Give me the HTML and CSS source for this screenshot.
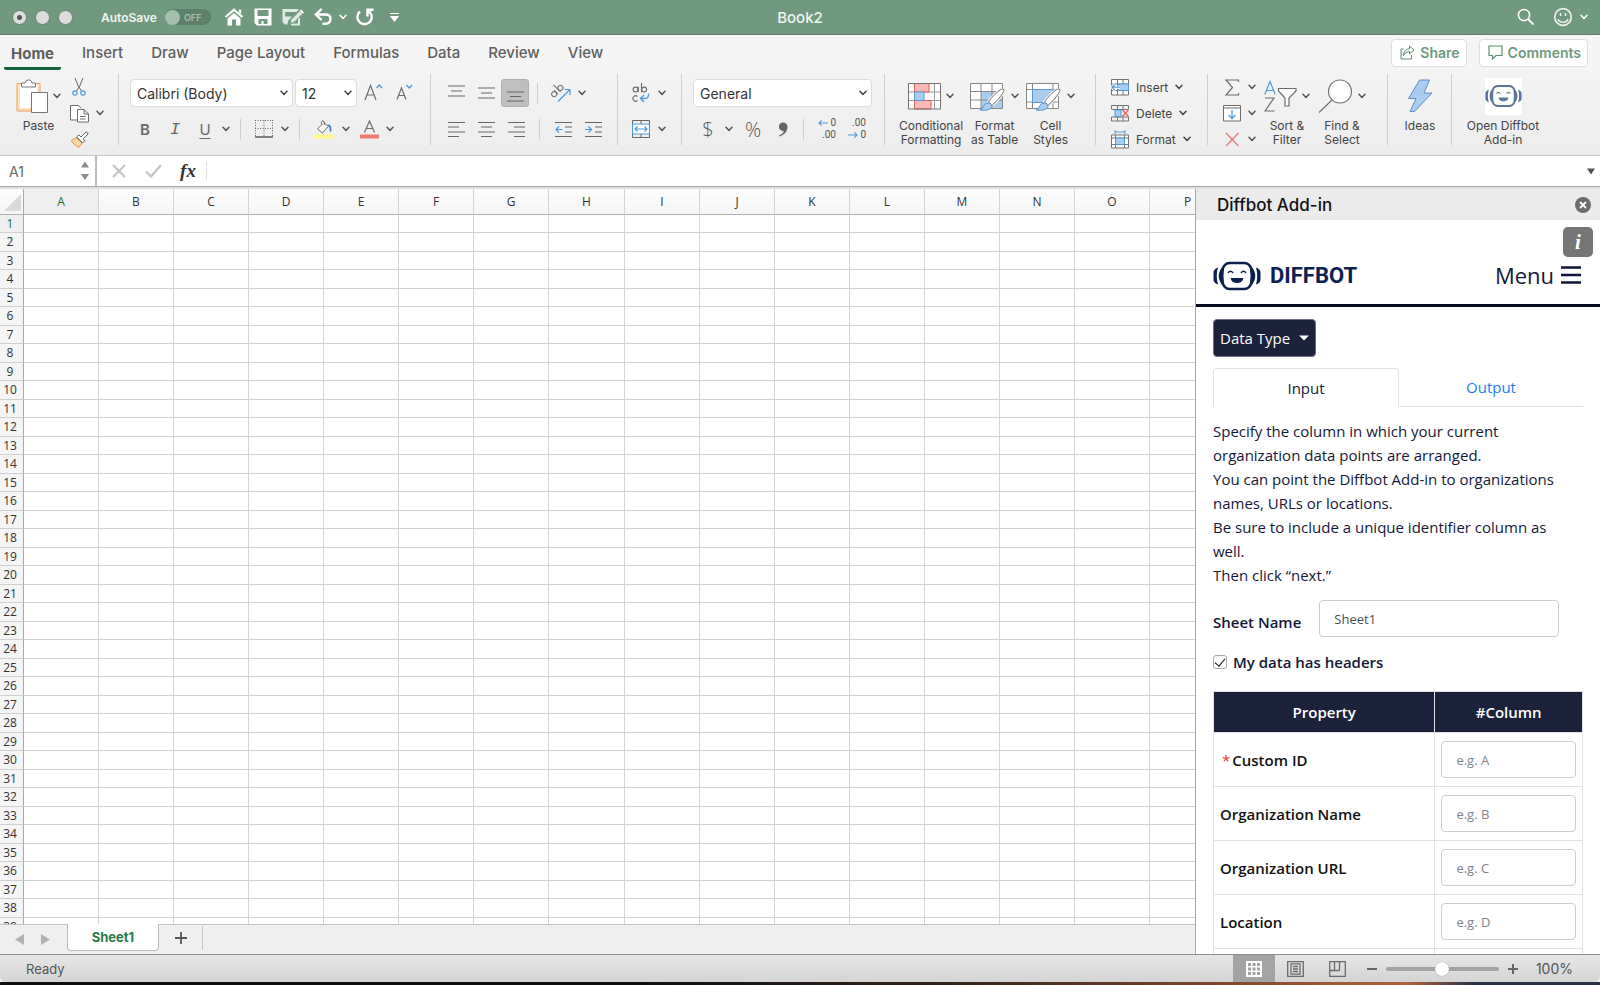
FILE: index.html
```html
<!DOCTYPE html>
<html lang="en">
<head>
<meta charset="utf-8">
<title>Book2</title>
<link rel="stylesheet" href="styles.css">
</head>
<body>
<svg class="sprite" aria-hidden="true">
  <symbol id="chev" viewBox="0 0 8 6"><path d="M1 1.2 4 4.500 7 1.2" fill="none" stroke="currentColor" stroke-width="1.500" stroke-linecap="round" stroke-linejoin="round"/></symbol>
  <symbol id="bot" viewBox="0 0 48 30">
    <path d="M5 6.500Q1 8 .5 11V19Q1 22 5 23.500Q2.500 15 5 6.500ZM43 6.500Q47 8 47.500 11V19Q47 22 43 23.500Q45.500 15 43 6.500Z" fill="currentColor"/>
    <path d="M10 5Q1.500 15 10 25ZM38 5Q46.500 15 38 25Z" fill="currentColor"/>
    <path d="M17 2H31Q36 2 38 7Q39.500 15 38 23Q36 28 31 28H17Q12 28 10 23Q8.500 15 10 7Q12 2 17 2Z" fill="none" stroke="currentColor" stroke-width="2.400"/>
    <path d="M15 12Q17.500 8.500 20 12M28 12Q30.500 8.500 33 12" fill="none" stroke="currentColor" stroke-width="1.400"/>
    <path d="M17.500 17H30.500Q29.500 22 24 22T17.500 17Z" fill="currentColor"/>
  </symbol>
  <symbol id="brush" viewBox="0 0 26 24">
    <path d="M23.500 .8C19 2.500 12 10 9.500 14L13 17.500C17 14 24 6 25 2.500Q25 .5 23.500 .8Z" fill="#fff" stroke="#f1f1f1" stroke-width="3"/>
    <path d="M23.500 .8C19 2.500 12 10 9.500 14L13 17.500C17 14 24 6 25 2.500Q25 .5 23.500 .8Z" fill="#fff" stroke="#737373"/>
    <path d="M9 15Q13 15 13 18.500Q11 23.500 1 22Q4 21 4.500 18Q6 15 9 15Z" fill="#a9cdf0" stroke="#5c98d0"/>
  </symbol>
</svg>

<header class="titlebar">
  <div class="title-left">
    <div class="lights"><i class="light dot"></i><i class="light"></i><i class="light"></i></div>
    <label class="autosave">AutoSave <button class="toggle" type="button" aria-label="AutoSave"><span class="knob"></span>OFF</button></label>
    <div class="quick">
      <button type="button" aria-label="Home"><svg width="20" height="18" viewBox="0 0 20 18"><path d="M1.500 9 10 1.800 18.500 9" fill="none" stroke="#fff" stroke-width="2.200"/><path d="M15 1.500h2.200v4.500L15 4.200ZM10 5 16.500 10.500V17.500H12V11.500H8V17.500H3.500V10.500Z" fill="#fff"/></svg></button>
      <button type="button" aria-label="Save"><svg width="18" height="18" viewBox="0 0 18 18"><path d="M.5.5H17.500V17.500H3L.5 15Z" fill="#fff"/><path d="M3.500 2H14.500V8H3.500ZM4.500 11H13.500V16H9.500V13H7.500V16H4.500Z" fill="#70997f"/></svg></button>
      <button type="button" aria-label="Save a copy"><svg width="22" height="18" viewBox="0 0 22 18"><path d="M.5 1H17L14.500 4H3.200V8.500H10L6 13 5.500 16.500H3L.5 14Z" fill="#dcebe1"/><path d="M9 16.500H17V10" fill="none" stroke="#dcebe1" stroke-width="2"/><path d="M8 15.500 9 11.500 17.500 3 20.500 6 12 14.500Z" fill="#dcebe1" stroke="#70997f"/><path d="m19 1.500 3 3-1.500 1.500-3-3Z" fill="#fff"/></svg></button>
      <button type="button" aria-label="Undo"><svg width="18" height="18" viewBox="0 0 18 18"><path d="M7 1.500 1.800 6.500 7 11.500M2 6.500H11.500Q16.500 6.500 16.500 11T11.500 15.800H9.500" fill="none" stroke="#fff" stroke-width="2.400" stroke-linecap="round"/></svg></button>
      <button type="button" class="tight" aria-label="Undo history"><svg width="8" height="6"><use href="#chev"/></svg></button>
      <button type="button" class="tight" aria-label="Redo"><svg width="18" height="18" viewBox="0 0 18 18"><path d="M4 3.500A7.200 7.200 0 1 0 12.500 3M17.500 1.800H11.500V8.500" fill="none" stroke="#fff" stroke-width="2.400"/></svg></button>
      <button type="button" aria-label="Customize"><svg width="9" height="10" viewBox="0 0 9 10"><path d="M0 1.500H9M1 4.500H8L4.500 9Z" fill="#fff" stroke="#fff" stroke-width="1.200"/></svg></button>
    </div>
  </div>
  <h1 class="doc-name">Book2</h1>
  <div class="title-right">
    <button type="button" aria-label="Search"><svg width="18" height="18" viewBox="0 0 18 18"><circle cx="7" cy="7" r="5.600" fill="none" stroke="#fff" stroke-width="1.500"/><path d="m11 11 5.500 5.500" stroke="#fff" stroke-width="1.800"/></svg></button>
    <button type="button" class="smile" aria-label="Feedback"><svg width="20" height="20" viewBox="0 0 20 20" fill="none" stroke="#e9f2ec"><circle cx="10" cy="10" r="8.300" stroke-width="1.700"/><path d="M7.500 6V9M12.500 6V9M5 12Q6 15.200 10 15.200T15 12" stroke-width="1.500"/></svg><svg width="8" height="6"><use href="#chev"/></svg></button>
  </div>
</header>

<nav class="tabs">
  <a class="tab active" href="#home">Home</a>
  <a class="tab" href="#insert">Insert</a>
  <a class="tab" href="#draw">Draw</a>
  <a class="tab" href="#layout">Page Layout</a>
  <a class="tab" href="#formulas">Formulas</a>
  <a class="tab" href="#data">Data</a>
  <a class="tab" href="#review">Review</a>
  <a class="tab" href="#view">View</a>
  <div class="tab-actions">
    <button type="button" class="pill"><svg width="15" height="15" viewBox="0 0 15 15" fill="none" stroke="#5d8f70"><path d="M3.500 4H1V14H11.500V10"/><path d="M9.500 1 14 5 9.500 9V6.500Q5.500 6.500 3.500 10.500Q4 4.500 9.500 3.500Z"/></svg>Share</button>
    <button type="button" class="pill"><svg width="15" height="15" viewBox="0 0 15 15" fill="none" stroke="#5d8f70" stroke-width="1.200"><path d="M1 1H14V10.500H8L4.500 14V10.500H1Z"/></svg>Comments</button>
  </div>
</nav>

<section class="ribbon" aria-label="Ribbon">
  <div class="group g-clip">
    <button type="button" class="big"><span class="pic"><svg width="32" height="35" viewBox="0 0 32 35"><path d="M1 4.500H24V14H15V32H1Z" fill="#fce3bd" stroke="#eda05a"/><path d="M4 6H21V14H15V29H4Z" fill="#fff"/><path d="M5.500 8V4H9Q9.500 .8 12.500 .8T16 4H19.500V8Z" fill="#fff" stroke="#777"/><path d="M15.500 13.500H31.500V33.500H15.500Z" fill="#fff" stroke="#777"/></svg><svg class="ch" width="8" height="6"><use href="#chev"/></svg></span><span class="cap">Paste</span></button>
    <div class="stack">
      <button type="button" aria-label="Cut"><svg width="18" height="18" viewBox="0 0 18 18" fill="none"><path d="M5 0Q8 9 11.500 13M13 0Q10 9 6.500 13" stroke="#666"/><circle cx="5" cy="15" r="2.200" stroke="#4f9bd9" stroke-width="1.200"/><circle cx="13" cy="15" r="2.200" stroke="#4f9bd9" stroke-width="1.200"/></svg></button>
      <button type="button" aria-label="Copy"><svg width="19" height="19" viewBox="0 0 19 19" fill="#fff" stroke="#6d6d6d"><path d="M7.500 16H.5V1.500H8.500L11 4"/><path d="M7.500 5.500H14L18.500 10V18H7.500ZM14 5.500V10H18.500M10 12.500H15.500M10 15H15.500"/></svg><svg class="ch" width="8" height="6"><use href="#chev"/></svg></button>
      <button type="button" aria-label="Format painter"><svg width="19" height="17" viewBox="0 0 19 17"><path d="M1 9.500 7 6.500 12 12 9 16.500Q4 14.500 1 9.500Z" fill="#fbd7a6" stroke="#ed9a50"/><path d="M6.500 6 9 4 11 6 16 1Q18.500 1 18 3L13 8 15 9.500 12.500 12Z" fill="#fff" stroke="#6d6d6d"/><path d="m7 6.500 5.500 5.500" stroke="#6d6d6d"/></svg></button>
    </div>
  </div>

  <div class="group rows g-font">
    <div class="row">
      <span class="select w-font"><select aria-label="Font"><option>Calibri (Body)</option></select><svg width="8" height="6"><use href="#chev"/></svg></span>
      <span class="select w-size"><select aria-label="Font size"><option>12</option></select><svg width="8" height="6"><use href="#chev"/></svg></span>
      <button type="button" class="b30" aria-label="Increase font size"><svg width="20" height="18" viewBox="0 0 20 18" fill="none"><path d="M1 16 6.500 1.500 12 16M3 11H10" stroke="#6d6d6d" stroke-width="1.200"/><path d="m12.500 4 2.800-3 2.800 3" stroke="#4f9bd9" stroke-width="1.300"/></svg></button>
      <button type="button" class="b30" aria-label="Decrease font size"><svg width="18" height="18" viewBox="0 0 18 18" fill="none"><path d="M2 15.500 6.500 4 11 15.500M3.500 11.500H9.500" stroke="#6d6d6d" stroke-width="1.200"/><path d="m11.500 1 2.800 3 2.800-3" stroke="#4f9bd9" stroke-width="1.300"/></svg></button>
    </div>
    <div class="row low">
      <button type="button" class="b30 glyph bold">B</button>
      <button type="button" class="b30 glyph ital">I</button>
      <button type="button" class="b30 glyph under">U</button>
      <button type="button" class="b12" aria-label="Underline style"><svg width="8" height="6"><use href="#chev"/></svg></button>
      <i class="sep"></i>
      <button type="button" class="b30" aria-label="Borders"><svg width="18" height="18" viewBox="0 0 18 18" stroke="#666"><path d="M.5 0V17M17.500 0V17M9 0V17M0 .5H18M0 8.500H18" stroke-dasharray="1 1.500"/><path d="M0 17H18" stroke-width="1.600"/></svg></button>
      <button type="button" class="b12" aria-label="Border style"><svg width="8" height="6"><use href="#chev"/></svg></button>
      <i class="sep"></i>
      <button type="button" class="b30" aria-label="Fill color"><svg width="19" height="19" viewBox="0 0 19 19"><path d="M9 1.500 14 6.500 8.500 13 3.500 9 9 3.500M7.500 4.500Q7 .5 9 .8T10.500 5" fill="#fff" stroke="#6d6d6d"/><path d="M13.500 5.500Q17 4.500 16.500 11.500" fill="none" stroke="#3c7fc0" stroke-width="1.800"/><path d="M0 14.500H19V18.500H0Z" fill="#fdf986"/></svg></button>
      <button type="button" class="b16" aria-label="Fill color list"><svg width="8" height="6"><use href="#chev"/></svg></button>
      <button type="button" class="b30" aria-label="Font color"><svg width="19" height="19" viewBox="0 0 19 19"><path d="M4.500 12.500 9.500 1 14.500 12.500M6 8.500H13" fill="none" stroke="#6d6d6d" stroke-width="1.200"/><path d="M0 14.500H19V18.500H0Z" fill="#f5786f"/></svg></button>
      <button type="button" class="b12" aria-label="Font color list"><svg width="8" height="6"><use href="#chev"/></svg></button>
    </div>
  </div>

  <div class="group rows g-align">
    <div class="row">
      <button type="button" class="b30" aria-label="Top align"><svg width="17" height="17" viewBox="0 0 17 17" stroke="#666" stroke-width="1.200"><path d="M0 1H17M3 6H14M0 11H17"/></svg></button>
      <button type="button" class="b30" aria-label="Middle align"><svg width="17" height="17" viewBox="0 0 17 17" stroke="#666" stroke-width="1.200"><path d="M0 3H17M3 8H14M0 13H17"/></svg></button>
      <button type="button" class="b30 on" aria-label="Bottom align"><svg width="17" height="17" viewBox="0 0 17 17" stroke="#666" stroke-width="1.200"><path d="M0 7H17M3 11.500H14M0 16H17"/></svg></button>
      <i class="sep"></i>
      <button type="button" class="b30" aria-label="Orientation"><svg width="20" height="20" viewBox="0 0 20 20" fill="none"><g stroke="#6d6d6d" transform="rotate(-45 6 9)"><circle cx="2.500" cy="8.500" r="2.500"/><path d="M5.300 5.500V11.500M8.500 1.500V11.500"/><circle cx="11.300" cy="8.500" r="2.500"/></g><path d="M7 18.500 18.500 7M13.500 6.500H19V12" stroke="#4f9bd9" stroke-width="1.200"/></svg></button>
      <button type="button" class="b12" aria-label="Orientation list"><svg width="8" height="6"><use href="#chev"/></svg></button>
    </div>
    <div class="row">
      <button type="button" class="b30" aria-label="Align left"><svg width="17" height="17" viewBox="0 0 17 17" stroke="#666" stroke-width="1.200"><path d="M0 1.500H17M0 6H11M0 11H17M0 15.500H11"/></svg></button>
      <button type="button" class="b30" aria-label="Center"><svg width="17" height="17" viewBox="0 0 17 17" stroke="#666" stroke-width="1.200"><path d="M0 1.500H17M3 6H14M0 11H17M3 15.500H14"/></svg></button>
      <button type="button" class="b30" aria-label="Align right"><svg width="17" height="17" viewBox="0 0 17 17" stroke="#666" stroke-width="1.200"><path d="M0 1.500H17M6 6H17M0 11H17M6 15.500H17"/></svg></button>
      <i class="sep"></i>
      <button type="button" class="b30" aria-label="Decrease indent"><svg width="17" height="17" viewBox="0 0 17 17" stroke="#666" stroke-width="1.200" fill="none"><path d="M0 1.500H17M10 6H17M10 11H17M0 15.500H17"/><path d="M7.500 8.500H1M4 5.500 1 8.500 4 11.500" stroke="#4f9bd9"/></svg></button>
      <button type="button" class="b30" aria-label="Increase indent"><svg width="17" height="17" viewBox="0 0 17 17" stroke="#666" stroke-width="1.200" fill="none"><path d="M0 1.500H17M10 6H17M10 11H17M0 15.500H17"/><path d="M0 8.500H6.500M3.500 5.500 6.500 8.500 3.500 11.500" stroke="#4f9bd9"/></svg></button>
    </div>
  </div>

  <div class="group rows g-wrap">
    <div class="row">
      <button type="button" class="b30" aria-label="Wrap text"><svg width="18" height="20" viewBox="0 0 18 20" fill="none"><g stroke="#6d6d6d" stroke-width="1.100"><circle cx="3.500" cy="6.500" r="2.400"/><path d="M6.300 3.500V9.200M9.500 0V9.200"/><circle cx="12.200" cy="6.500" r="2.400"/><path d="M5.500 13.500A2.700 2.700 0 1 0 5.500 17.500"/></g><path d="M16.500 10.500Q17 15.500 13 15.500H9M12 12 8.500 15.500 12 19" stroke="#4f9bd9" stroke-width="1.300"/></svg></button>
      <button type="button" class="b12" aria-label="Wrap list"><svg width="8" height="6"><use href="#chev"/></svg></button>
    </div>
    <div class="row">
      <button type="button" class="b30" aria-label="Merge"><svg width="18" height="18" viewBox="0 0 18 18" fill="none" stroke="#666"><path d="M.5.500H17.500V17.500H.5ZM9 0V4M9 14V18"/><path d="M.5 4H17.500V14H.5Z" fill="#fff" stroke="#4f9bd9" stroke-width="1.200"/><path d="M3 9H15M5.500 6.500 3 9 5.500 11.500M12.500 6.500 15 9 12.500 11.500" stroke="#4f9bd9" stroke-width="1.200"/></svg></button>
      <button type="button" class="b12" aria-label="Merge list"><svg width="8" height="6"><use href="#chev"/></svg></button>
    </div>
  </div>

  <div class="group rows g-num">
    <div class="row"><span class="select w-num"><select aria-label="Number format"><option>General</option></select><svg width="8" height="6"><use href="#chev"/></svg></span></div>
    <div class="row low">
      <button type="button" class="b30 sym">$</button>
      <button type="button" class="b12" aria-label="Currency list"><svg width="8" height="6"><use href="#chev"/></svg></button>
      <button type="button" class="b36 sym">%</button>
      <button type="button" class="b24" aria-label="Comma style"><svg width="10" height="15" viewBox="0 0 10 15"><path d="M9.500 5Q9.500 11.500 1.500 14.500L1 13.500Q5.500 11.500 5.800 9A4.300 4.300 0 1 1 9.500 5Z" fill="#666"/></svg></button>
      <i class="sep"></i>
      <button type="button" class="b30 dec" aria-label="Increase decimal"><svg width="10" height="8" viewBox="0 0 11 8" fill="none" stroke="#4f9bd9" stroke-width="1.200"><path d="M11 4H1M4 1 1 4 4 7"/></svg><span>0</span><span class="wide">.00</span></button>
      <button type="button" class="b30 dec" aria-label="Decrease decimal"><span class="wide">.00</span><svg width="10" height="8" viewBox="0 0 11 8" fill="none" stroke="#4f9bd9" stroke-width="1.200"><path d="M0 4H10M7 1 10 4 7 7"/></svg><span>0</span></button>
    </div>
  </div>

  <div class="group g-style">
    <button type="button" class="big"><span class="pic"><svg width="33" height="27" viewBox="0 0 33 27"><path d="M.5.500H32.500V26H.5Z" fill="#fff"/><path d="M.5 9H32.500M.5 17.500H32.500M6.500 0V26M26.500 0V26" stroke="#999"/><path d="M6.500.500H21V9H6.500ZM6.500 17.500H23V26H6.500Z" fill="#f8b8b5" stroke="#e05e5a"/><path d="M6.500 9H16V17.500H6.500Z" fill="#a9cdf0" stroke="#5c98d0"/><path d="M.5.500H32.500V26H.5Z" fill="none" stroke="#737373"/></svg><svg class="ch" width="8" height="6"><use href="#chev"/></svg></span><span class="cap">Conditional<br>Formatting</span></button>
    <button type="button" class="big"><span class="pic"><svg width="36" height="32" viewBox="0 0 36 32"><path d="M.5 3.500H32.500V28.500H.5Z" fill="#fff"/><path d="M11 11.500H32.500V28.500H11Z" fill="#a9cdf0"/><path d="M.5 3.500H32.500V28.500H.5ZM.5 11.500H32.500M.5 20H32.500M11 3.500V28.500M22 3.500V28.500" fill="none" stroke="#888"/><use href="#brush" x="9" y="8" width="26" height="24"/></svg><svg class="ch" width="8" height="6"><use href="#chev"/></svg></span><span class="cap">Format<br>as Table</span></button>
    <button type="button" class="big"><span class="pic"><svg width="36" height="32" viewBox="0 0 36 32"><path d="M.5 3.500H32.500V28.500H.5Z" fill="#fff"/><path d="M.5 3.500H32.500V28.500H.5ZM.5 9.500H32.500M.5 22H32.500M6.500 3.500V28.500M27 3.500V28.500" fill="none" stroke="#888"/><path d="M6.500 9.500H27V22.500H6.500Z" fill="#a9cdf0" stroke="#5c98d0"/><use href="#brush" x="9" y="8" width="26" height="24"/></svg><svg class="ch" width="8" height="6"><use href="#chev"/></svg></span><span class="cap">Cell<br>Styles</span></button>
  </div>

  <div class="group g-cells">
    <div class="stack text">
      <button type="button"><svg width="18" height="17" viewBox="0 0 18 17" fill="none" stroke="#737373"><path d="M.5.500H17.500V16H.5ZM.5 5H17.500M.5 11.500H17.500M6.500 0V16M12 0V16" fill="#fff"/><path d="M7 5H17.500V11.500H7Z" fill="#a9cdf0" stroke="#4f9bd9"/><path d="M9 8.200H1M4.500 4.700 1 8.200 4.500 11.700" stroke="#fff" stroke-width="3"/><path d="M9 8.200H1M4.500 4.700 1 8.200 4.500 11.700" stroke="#4f9bd9" stroke-width="1.200"/></svg>Insert<svg class="ch" width="8" height="6"><use href="#chev"/></svg></button>
      <button type="button"><svg width="18" height="17" viewBox="0 0 18 17" fill="none" stroke="#737373"><path d="M.5 4V.5H17.500V4M.5 12V16H17.500V12M.5 4.500H17.500M.5 12H17.500M6.500 0V4M12 0V4M6.500 12V16M12 12V16"/><path d="M4 5H10V11.500H4Z" fill="#a9cdf0" stroke="#4f9bd9"/><path d="m11.500 5 6 6.500M17.500 5l-6 6.500" stroke="#e8605b" stroke-width="1.300"/></svg>Delete<svg class="ch" width="8" height="6"><use href="#chev"/></svg></button>
      <button type="button"><svg width="18" height="19" viewBox="0 0 18 19" fill="none" stroke="#737373"><path d="M.5 5V18H17.500V5ZM.5 8H17.500M.5 14.500H17.500M4.500 5V18M13.500 5V18" fill="#fff"/><path d="M4.500 8H13.500V14.500H4.500Z" fill="#a9cdf0" stroke="#4f9bd9"/><path d="M4 0V4M14 0V4M4 2H14" stroke="#4f9bd9"/></svg>Format<svg class="ch" width="8" height="6"><use href="#chev"/></svg></button>
    </div>
  </div>

  <div class="group g-edit">
    <div class="stack">
      <button type="button" aria-label="AutoSum"><svg width="18" height="17" viewBox="0 0 18 17" fill="none" stroke="#6d6d6d" stroke-width="1.200"><path d="M15.500 3V1H3L9.500 8.500 3 16H15.500V14"/></svg><svg class="ch" width="8" height="6"><use href="#chev"/></svg></button>
      <button type="button" aria-label="Fill"><svg width="18" height="17" viewBox="0 0 18 17" fill="none"><path d="M.5.500H17.500V16H.5ZM.5 3H17.500" fill="#fff" stroke="#6d6d6d"/><path d="M9 5V13.500M5.500 10 9 13.500 12.500 10" stroke="#4f9bd9" stroke-width="1.300"/></svg><svg class="ch" width="8" height="6"><use href="#chev"/></svg></button>
      <button type="button" aria-label="Clear"><svg width="18" height="15" viewBox="0 0 18 15"><path d="M3 1 15.500 14M15.500 1 3 14" stroke="#ec7772" stroke-width="1.200"/></svg><svg class="ch" width="8" height="6"><use href="#chev"/></svg></button>
    </div>
    <button type="button" class="big"><span class="pic"><svg width="33" height="32" viewBox="0 0 33 32" fill="none"><path d="M.8 14.500 6 1.500 11.200 14.500M2.500 10.500H9.500" stroke="#4f9bd9" stroke-width="1.200"/><path d="M1 18H10L1 31H10.500" stroke="#6d6d6d" stroke-width="1.200"/><path d="M14.500 8.500H32V11L25 18V26H21V18L14.500 11Z" fill="#fff" stroke="#6d6d6d" stroke-width="1.200"/></svg><svg class="ch" width="8" height="6"><use href="#chev"/></svg></span><span class="cap">Sort &amp;<br>Filter</span></button>
    <button type="button" class="big"><span class="pic"><svg width="35" height="35" viewBox="0 0 35 35"><circle cx="22" cy="12.500" r="11.500" fill="#fff" stroke="#737373" stroke-width="1.200"/><path d="M14 21 1 33.500" stroke="#737373" stroke-width="1.200"/></svg><svg class="ch" width="8" height="6"><use href="#chev"/></svg></span><span class="cap">Find &amp;<br>Select</span></button>
  </div>

  <div class="group g-ideas">
    <button type="button" class="big"><span class="pic"><svg width="26" height="34" viewBox="0 0 26 34"><path d="M12.500 1H22.500L17 14H25L7.500 32.500H3L9 19.500H1.500Z" fill="#a9cdf0" stroke="#5c90c8"/></svg></span><span class="cap">Ideas</span></button>
  </div>
  <div class="group g-addin">
    <button type="button" class="big"><span class="pic"><span class="bot-tile"><svg width="37" height="24"><use href="#bot"/></svg></span></span><span class="cap">Open Diffbot<br>Add-in</span></button>
  </div>
</section>

<div class="formula">
  <div class="namebox">
    <input type="text" value="A1" aria-label="Name box">
    <svg width="8" height="20" viewBox="0 0 8 20"><path d="M0 6.500 4 .5 8 6.500ZM0 13 4 19 8 13Z" fill="#8b8b8b"/></svg>
  </div>
  <button type="button" aria-label="Cancel"><svg width="14" height="14" viewBox="0 0 14 14"><path d="m1 1 12 12M13 1 1 13" stroke="#c6c6c6" stroke-width="2.200"/></svg></button>
  <button type="button" aria-label="Enter"><svg width="17" height="14" viewBox="0 0 17 14"><path d="m1 7.500 5 5L16 1" fill="none" stroke="#c6c6c6" stroke-width="2.400"/></svg></button>
  <button type="button" class="fx">fx</button>
  <input class="formula-input" type="text" aria-label="Formula">
  <button type="button" aria-label="Expand formula bar"><svg width="8" height="7" viewBox="0 0 8 7"><path d="M0 .5H8L4 6.500Z" fill="#555"/></svg></button>
</div>

<main class="work">
  <section class="book">
    <div class="grid-wrap">
      <table class="grid"><thead><tr id="cols"><th class="corner"><svg width="17" height="17" viewBox="0 0 17 17"><path d="M17 0V17H0Z" fill="#d9d9d9"/></svg></th></tr></thead><tbody id="cells"></tbody></table>
    </div>
    <div class="sheets">
      <button type="button" aria-label="Previous sheet"><svg width="9" height="11" viewBox="0 0 9 11"><path d="M9 0V11L0 5.500Z" fill="#b2b2b2"/></svg></button>
      <button type="button" aria-label="Next sheet"><svg width="9" height="11" viewBox="0 0 9 11"><path d="M0 0V11L9 5.500Z" fill="#b2b2b2"/></svg></button>
      <a class="sheet" href="#sheet1">Sheet1</a>
      <button type="button" class="add" aria-label="Add sheet"><svg width="12" height="12" viewBox="0 0 12 12"><path d="M6 0V12M0 6H12" stroke="#555" stroke-width="1.800"/></svg></button>
    </div>
  </section>

  <aside class="pane">
    <div class="pane-head"><h2>Diffbot Add-in</h2><button type="button" aria-label="Close"><svg width="16" height="16" viewBox="0 0 16 16"><circle cx="8" cy="8" r="8" fill="#6c6c6c"/><path d="m5 5 6 6M11 5l-6 6" stroke="#fff" stroke-width="1.800"/></svg></button></div>
    <div class="pane-body">
      <button type="button" class="info" aria-label="Info">i</button>
      <div class="brand">
        <a class="logo" href="#diffbot"><svg width="48" height="30"><use href="#bot"/></svg>DIFFBOT</a>
        <button type="button" class="menu">Menu<svg width="20" height="18" viewBox="0 0 20 18"><path d="M0 1.500H20M0 9H20M0 16.500H20" stroke="#10143a" stroke-width="2.600"/></svg></button>
      </div>
      <div class="content">
        <button type="button" class="dtype">Data Type<svg width="10" height="6" viewBox="0 0 10 6"><path d="M0 .5H10L5 5.500Z" fill="#fff"/></svg></button>
        <nav class="io"><a class="sel" href="#input">Input</a><a href="#output">Output</a></nav>
        <p class="help">Specify the column in which your current organization data points are arranged.<br>You can point the Diffbot Add-in to organizations names, URLs or locations.<br>Be sure to include a unique identifier column as well.<br>Then click “next.”</p>
        <div class="field"><label for="sheet">Sheet Name</label><input id="sheet" type="text" value="Sheet1"></div>
        <div class="check"><input id="headers" type="checkbox" checked><label for="headers">My data has headers</label></div>
        <table class="props">
          <thead><tr><th class="p">Property</th><th>#Column</th></tr></thead>
          <tbody>
            <tr><td><label for="c1"><span class="req">*</span>Custom ID</label></td><td><input id="c1" type="text" placeholder="e.g. A"></td></tr>
            <tr><td><label for="c2">Organization Name</label></td><td><input id="c2" type="text" placeholder="e.g. B"></td></tr>
            <tr><td><label for="c3">Organization URL</label></td><td><input id="c3" type="text" placeholder="e.g. C"></td></tr>
            <tr><td><label for="c4">Location</label></td><td><input id="c4" type="text" placeholder="e.g. D"></td></tr>
            <tr><td></td><td></td></tr>
          </tbody>
        </table>
      </div>
    </div>
  </aside>
</main>

<footer class="status">
  <span class="ready">Ready</span>
  <button type="button" class="view on" aria-label="Normal view"><svg width="16" height="16" viewBox="0 0 16 16"><path d="M0 0H16V16H0Z" fill="#fff"/><path d="M2 2H5V5H2ZM6.500 2H9.500V5H6.500ZM11 2H14V5H11ZM2 6.500H5V9.500H2ZM6.500 6.500H9.500V9.500H6.500ZM11 6.500H14V9.500H11ZM2 11H5V14H2ZM6.500 11H9.500V14H6.500ZM11 11H14V14H11Z" fill="#a3a3a3"/></svg></button>
  <button type="button" class="view" aria-label="Page layout view"><svg width="17" height="16" viewBox="0 0 17 16" fill="none" stroke="#6b6b6b" stroke-width="1.300"><path d="M.7.700H16.300V15.300H.7ZM4 2.800H13V13.200H4ZM6 5.500H11M6 8H11M6 10.500H11"/></svg></button>
  <button type="button" class="view" aria-label="Page break view"><svg width="17" height="16" viewBox="0 0 17 16" fill="none" stroke="#6b6b6b" stroke-width="1.300"><path d="M.7.700H16.300V15.300H.7ZM5.500 .7V9.500M10.500 .7V9.500M.7 9.500H10.500"/></svg></button>
  <div class="zoom">
    <button type="button" aria-label="Zoom out"><svg width="10" height="10" viewBox="0 0 10 10"><path d="M0 5H10" stroke="#666" stroke-width="2"/></svg></button>
    <input type="range" min="0" max="100" value="50" aria-label="Zoom">
    <button type="button" aria-label="Zoom in"><svg width="10" height="10" viewBox="0 0 10 10"><path d="M0 5H10M5 0V10" stroke="#666" stroke-width="2"/></svg></button>
  </div>
  <span class="pct">100%</span>
</footer>
<div class="desktop"></div>
<script src="grid.js"></script>
</body>
</html>
```
FILE: styles.css
```css
* { box-sizing: border-box; }
body {
  margin: 0;
  height: 100vh;
  display: flex;
  flex-direction: column;
  overflow: hidden;
  background: #efefef;
  color: #444;
  font-family: Inter, "Liberation Sans", sans-serif;
  font-size: 13px;
}
button {
  display: flex;
  align-items: center;
  justify-content: center;
  padding: 0;
  border: 0;
  background: none;
  color: #555;
  font: inherit;
}
a { text-decoration: none; }
svg { display: block; flex: none; }
.sprite { position: absolute; width: 0; height: 0; }

/* Title bar */
.titlebar {
  flex: none;
  display: grid;
  grid-template-columns: 1fr auto 1fr;
  align-items: center;
  height: 35px;
  padding: 0 12px;
  background: #70997f;
  border-bottom: 1px solid #5d806b;
  color: #eef5f0;
}
.titlebar button { color: #fff; }
.title-left, .lights, .quick, .title-right, .autosave { display: flex; align-items: center; }
.lights { gap: 8px; }
.light {
  width: 15px;
  height: 15px;
  border-radius: 50%;
  background: #dcdcdc;
  border: 1px solid #688273;
}
.light.dot { background: radial-gradient(circle, #555 0 2px, #dcdcdc 3px); }
.autosave { gap: 8px; margin-left: 28px; font-weight: 600; font-size: 12px; }
.toggle {
  justify-content: flex-start;
  gap: 4px;
  width: 46px;
  height: 16px;
  border-radius: 8px;
  background: #5d806a;
}
.titlebar .toggle { color: #a8c0b1; font-size: 9px; }
.knob { width: 15px; height: 15px; border-radius: 50%; background: #a5bfaf; }
.quick { margin-left: 13px; gap: 10px; }
.quick .tight { margin-left: -3px; }
.quick button:nth-child(6) { margin-left: -1px; }
.quick button:nth-child(7) { margin-left: 6px; }
.doc-name { margin: 0; font-size: 15px; font-weight: 500; }
.title-right { justify-content: flex-end; gap: 18px; }
.smile { gap: 7px; }

/* Ribbon tabs */
.tabs {
  flex: none;
  display: flex;
  align-items: center;
  gap: 28px;
  height: 35px;
  padding: 0 12px 0 4px;
  background: #f5f5f5;
}
.tab { color: #5f5f5f; font-size: 15px; font-weight: 500; }
.tab.active {
  margin-right: -7px;
  padding: 8px 7px 4px;
  border-bottom: 3px solid #12643a;
  border-radius: 2px;
  font-weight: 700;
}
.tab-actions { display: flex; gap: 12px; margin-left: auto; }
.pill {
  gap: 5px;
  height: 28px;
  padding: 0 6px 0 8px;
  border: 1px solid #dedede;
  border-radius: 4px;
  background: #fff;
  color: #6d997d;
  font-size: 14px;
  font-weight: 600;
}

/* Ribbon */
.ribbon {
  flex: none;
  display: flex;
  height: 86px;
  padding-top: 4px;
  background: linear-gradient(#f4f4f4, #ededed);
  border-bottom: 1px solid #c8c8c8;
}
.group {
  display: flex;
  align-items: flex-start;
  background: linear-gradient(#cfcfcf, #cfcfcf) right top / 1px 71px no-repeat;
}
.group:last-child { background: none; }
.rows { flex-direction: column; gap: 8px; padding-top: 5px; }
.row { display: flex; align-items: center; height: 28px; }
.g-clip { width: 119px; padding-left: 16px; gap: 9px; }
.g-font { width: 312px; padding-left: 11px; }
.g-align { width: 187px; padding-left: 10px; }
.g-wrap { width: 64px; padding-left: 8px; }
.g-num { width: 203px; padding-left: 11px; }
.g-style { width: 211px; padding-left: 14px; gap: 7px; }
.g-cells { width: 112px; padding-left: 15px; }
.g-edit { width: 180px; padding-left: 15px; gap: 8px; }
.g-ideas { width: 64px; justify-content: center; }
.g-addin { width: 102px; justify-content: center; }
.b12 { width: 12px; height: 28px; }
.b16 { width: 16px; height: 28px; }
.b24 { width: 24px; height: 28px; }
.b30 { width: 30px; height: 28px; }
.b36 { width: 36px; height: 28px; }
.b30.on {
  width: 28px;
  border: 1px solid #b0b0b0;
  border-radius: 3px;
  background: #bfbfbf;
}
.sep { width: 1px; height: 21px; margin: 0 8px; background: #cfcfcf; }
.glyph { font-size: 15px; color: #6a6a6a; }
.bold { font-weight: 600; }
.ital { font-family: "Liberation Mono", monospace; font-style: italic; font-size: 17px; }
.under { text-decoration: underline; text-underline-offset: 3px; }
.sym { font-family: "Open Sans", sans-serif; font-size: 20px; font-weight: 300; color: #555; }
.dec {
  display: grid;
  grid-template-columns: 10px 8px;
  justify-content: center;
  align-content: center;
  font-family: Roboto, sans-serif;
  font-size: 10px;
  line-height: 12px;
}
.dec svg { align-self: center; }
.dec .wide { grid-column: 1 / 3; text-align: right; }
.dec span { text-align: right; }
.select { display: grid; align-items: center; }
.select select, .select svg { grid-area: 1 / 1; }
.select svg { justify-self: end; margin-right: 5px; pointer-events: none; }
.select select {
  appearance: none;
  width: 100%;
  height: 28px;
  padding: 0 6px;
  border: 1px solid #dcdcdc;
  border-radius: 4px;
  background: #fff;
  color: #333;
  font: 14px Inter, "Liberation Sans", sans-serif;
}
.w-font { width: 163px; margin-right: 2px; }
.w-size { width: 62px; margin-right: 2px; }
.w-num { width: 179px; }
.big { flex-direction: column; gap: 3px; padding-top: 2px; }
.pic { display: flex; align-items: center; gap: 5px; height: 40px; color: #555; }
.cap { font-size: 12px; line-height: 14px; color: #444; white-space: nowrap; }
.stack { display: flex; flex-direction: column; }
.stack button { justify-content: flex-start; gap: 7px; height: 26px; }
.stack.text button { font-size: 12px; color: #444; }
.bot-tile {
  display: grid;
  place-items: center;
  width: 37px;
  height: 37px;
  background: #fff;
  color: #5b7698;
}

/* Formula bar */
.formula {
  flex: none;
  display: flex;
  align-items: center;
  height: 31px;
  background: #fff;
  border-bottom: 1px solid #a8a8a8;
}
.formula > button { width: 34px; }
.formula > button:last-child { width: 18px; }
.namebox {
  display: flex;
  align-items: center;
  align-self: stretch;
  width: 97px;
  margin-right: 5px;
  padding: 0 6px 0 9px;
  border-right: 2px solid #bdbdbd;
}
.formula input {
  min-width: 0;
  flex: 1;
  padding: 0;
  border: 0;
  background: none;
  color: #666;
  font: 14px Inter, "Liberation Sans", sans-serif;
}
.formula .fx {
  width: 36px;
  font: italic 700 19px "Liberation Serif", serif;
  color: #333;
}
.formula .formula-input { height: 18px; border-left: 1px solid #ddd; }

/* Worksheet */
.work {
  flex: 1;
  display: flex;
  min-height: 0;
  border-top: 2px solid #e0e0e0;
}
.book { flex: 1; min-width: 0; display: flex; flex-direction: column; }
.grid-wrap { flex: 1; min-height: 0; overflow: hidden; background: #fff; }
.grid {
  width: max-content;
  border-collapse: separate;
  border-spacing: 0;
  table-layout: fixed;
  font-family: "Open Sans", sans-serif;
  font-size: 12px;
}
.grid th, .grid td { padding: 0; border-right: 1px solid #d4d4d4; border-bottom: 1px solid #d0d0d0; }
.grid th { font-weight: 400; color: #333; line-height: 16px; }
.grid thead th {
  width: 75px;
  min-width: 75px;
  height: 26px;
  background: linear-gradient(#fdfdfd, #f5f5f5);
  border-bottom-color: #b0b0b0;
}
.grid thead th:nth-child(8n+9) { width: 76px; min-width: 76px; }
.grid thead .corner { width: 24px; min-width: 24px; }
.grid .corner svg { margin: 2px 0 0 4px; }
.grid tbody tr { height: 18px; }
.grid tbody tr:nth-child(even) { height: 19px; }
.grid tbody th { background: #f5f5f5; padding-right: 3px; }
.grid tbody th, .grid .corner { border-right-color: #a8a8a8; }
.grid .current { color: #1d6b3c; background: #efefef; }
.sheets {
  flex: none;
  display: flex;
  align-items: center;
  height: 30px;
  padding-left: 14px;
  gap: 16px;
  background: #efefef;
  border-top: 1px solid #c4c4c4;
}
.sheets button { width: 10px; }
.sheet {
  align-self: flex-start;
  width: 92px;
  height: 27px;
  margin: -1px 0 0 1px;
  line-height: 26px;
  border: 1px solid #bdbdbd;
  border-top: 0;
  border-radius: 0 0 4px 4px;
  background: #fff;
  color: #2a7a48;
  font-weight: 700;
  text-align: center;
}
.sheets .add {
  justify-content: flex-start;
  width: 28px;
  height: 24px;
  margin-top: -3px;
  border-right: 1px solid #c9c9c9;
}

/* Add-in pane */
.pane {
  width: 405px;
  flex: none;
  display: flex;
  flex-direction: column;
  border-left: 1px solid #a8a8a8;
  background: #fff;
  color: #14183a;
}
.pane-head {
  flex: none;
  display: flex;
  align-items: center;
  justify-content: space-between;
  height: 31px;
  padding: 0 9px 0 21px;
  background: #ebebeb;
}
.pane-head h2 { margin: 0; color: #111; font-size: 17px; font-weight: 500; }
.pane-body {
  position: relative;
  flex: 1;
  min-height: 0;
  overflow: hidden;
  font-family: "Open Sans", "Noto Sans", sans-serif;
  font-size: 15px;
}
.info {
  position: absolute;
  top: 7px;
  right: 7px;
  width: 30px;
  height: 30px;
  border-radius: 5px;
  background: #757575;
  color: #fff;
  font: italic 700 21px "Liberation Serif", serif;
}
.brand {
  display: flex;
  align-items: flex-end;
  justify-content: space-between;
  height: 87px;
  padding: 0 19px 13px 17px;
  border-bottom: 3px solid #07091c;
}
.logo {
  display: flex;
  align-items: center;
  gap: 9px;
  color: #0d2150;
  font: 700 22px/30px Roboto, sans-serif;
}
.menu { gap: 7px; color: #14183a; font-size: 22px; line-height: 32px; }
.content { padding: 12px 17px 0; }
.dtype {
  gap: 9px;
  height: 38px;
  padding: 0 6px;
  border: 1px solid #6b6f80;
  border-radius: 4px;
  background: #1c213c;
  color: #fff;
}
.io { display: flex; margin-top: 11px; border-bottom: 1px solid #dee2e6; }
.io a {
  flex: 1;
  height: 39px;
  margin-bottom: -1px;
  line-height: 38px;
  text-align: center;
  color: #1a7df5;
}
.io .sel {
  border: 1px solid #dee2e6;
  border-bottom-color: #fff;
  border-radius: 4px 4px 0 0;
  color: #14183a;
}
.help { margin: 12px 8px 0 0; line-height: 24px; }
.field { display: flex; align-items: center; gap: 18px; margin-top: 13px; font-weight: 600; }
.field label { padding-top: 6px; }
.pane-body input[type="text"] {
  height: 37px;
  padding: 0 14px;
  border: 1px solid #c9ced6;
  border-radius: 4px;
  background: #fff;
  color: #495057;
  font: 13px "Open Sans", "Noto Sans", sans-serif;
}
.pane-body input::placeholder { color: #7d848c; opacity: 1; }
.field input { width: 240px; }
.check { display: flex; align-items: center; gap: 6px; margin-top: 14px; font-weight: 600; line-height: 22px; }
.check input {
  appearance: none;
  width: 14px;
  height: 14px;
  margin: 0;
  border: 1px solid #a9a9a9;
  border-radius: 3px;
  display: grid;
  place-items: center;
}
.check input:checked::before {
  content: "";
  width: 5px;
  height: 9px;
  margin-bottom: 2px;
  border: solid #111;
  border-width: 0 1px 1px 0;
  transform: rotate(40deg);
}
.props {
  width: 100%;
  margin-top: 18px;
  border-collapse: collapse;
  table-layout: fixed;
  color: #111;
}
.props th {
  height: 41px;
  padding: 0;
  border: 1px solid #dee2e6;
  background: #1c213c;
  color: #fff;
  font-weight: 600;
}
.props .p { width: 60%; }
.props td { height: 54px; padding: 0 6px; border: 1px solid #dee2e6; font-weight: 600; }
.props td input { display: block; width: 100%; }
.req { margin: 0 2px; color: #e33; font-weight: 400; }

/* Status bar */
.status {
  flex: none;
  display: flex;
  align-items: center;
  height: 28px;
  padding-right: 27px;
  border-top: 1px solid #8f8f8f;
  border-radius: 0 0 6px 6px;
  background: linear-gradient(#e6e6e6, #d4d4d4);
}
.ready { margin: 0 auto 0 26px; color: #555; }
.view { width: 42px; height: 27px; }
.view.on { background: #a3a3a3; }
.zoom { display: flex; align-items: center; gap: 9px; margin: 0 18px 0 8px; }
.zoom input { appearance: none; width: 113px; height: 4px; margin: 0; border-radius: 2px; background: #a3a3a3; }
.zoom input::-webkit-slider-thumb {
  appearance: none;
  width: 14px;
  height: 14px;
  border-radius: 50%;
  background: #fff;
  box-shadow: 0 0 1px #777;
}
.pct { font-size: 14px; color: #555; }
.desktop {
  flex: none;
  height: 3px;
  background: linear-gradient(90deg, #101010 0 40%, #33241c 60%, #8a4a2c 78%, #b3623a 88%, #2a3246 92%, #2a3246);
}
```
FILE: grid.js
```js
const letters = "ABCDEFGHIJKLMNOP";
const cols = document.getElementById("cols");
const cells = document.getElementById("cells");

for (const letter of letters) {
  const th = document.createElement("th");
  th.textContent = letter;
  if (letter === "A") th.className = "current";
  cols.append(th);
}

for (let n = 1; n <= 39; n++) {
  const row = cells.insertRow();
  const th = document.createElement("th");
  th.textContent = n;
  if (n === 1) th.className = "current";
  row.append(th);
  for (const letter of letters) row.insertCell();
}
```
